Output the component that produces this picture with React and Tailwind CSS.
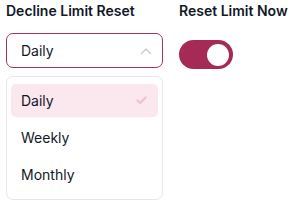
import React from "react";

export default function App() {
  const items = ["Daily", "Weekly", "Monthly"];
  return (
    <div className="w-[295px] h-[207px] bg-white flex gap-4 pl-[6px] pt-[1px]" style={{ fontFamily: "Inter, 'Noto Sans', sans-serif" }}>
      <div className="w-[157px] flex flex-col">
        <div className="text-[14px] leading-5 font-semibold text-[#111827]">Decline Limit Reset</div>
        <div className="mt-3 h-[35px] rounded-[7px] border border-[#a3345a] flex items-center justify-between pl-[14px] pr-[10px]">
          <span className="text-[14px] text-[#111827]">Daily</span>
          <svg width="12" height="8" viewBox="0 0 12 8" fill="none">
            <path d="M1.5 6.5 L6 2 L10.5 6.5" stroke="#c3c6cc" strokeWidth="1.2" strokeLinecap="round" strokeLinejoin="round" />
          </svg>
        </div>
        <div className="mt-2 h-[124px] rounded-[7px] border border-[#e5e7eb] px-[4px] pt-[7px] flex flex-col gap-1">
          {items.map((it, i) => (
            <div
              key={it}
              className={
                "h-[33px] rounded-[5px] flex items-center justify-between pl-[10px] pr-[11px] " +
                (i === 0 ? "bg-[#fbe8ee]" : "")
              }
            >
              <span className="text-[14px] text-[#111827]">{it}</span>
              {i === 0 && (
                <svg width="11" height="9" viewBox="0 0 11 9" fill="none">
                  <path d="M1.5 4.5 L4.2 7 L9.5 1.5" stroke="#f0bfcd" strokeWidth="2.2" strokeLinecap="round" strokeLinejoin="round" />
                </svg>
              )}
            </div>
          ))}
        </div>
      </div>
      <div className="flex flex-col">
        <div className="text-[14px] leading-5 font-semibold text-[#111827]">Reset Limit Now</div>
        <div className="mt-[19px] w-[54px] h-[29px] rounded-full bg-[#a52a55] flex items-center justify-end pr-[4px]">
          <div className="w-[22px] h-[22px] rounded-full bg-white"></div>
        </div>
      </div>
    </div>
  );
}
